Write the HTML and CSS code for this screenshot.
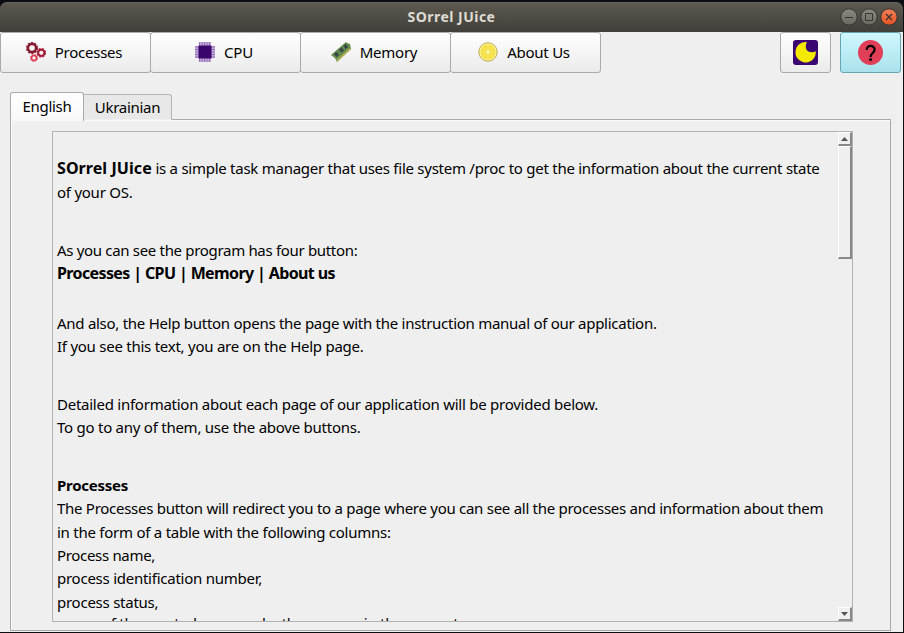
FILE: index.html
```html
<!DOCTYPE html>
<html lang="en">
<head>
<meta charset="utf-8">
<title>SOrrel JUice</title>
<link rel="stylesheet" href="styles.css">
</head>
<body>
<div class="window">
  <header class="titlebar">
    <h1>SOrrel JUice</h1>
    <div class="controls">
      <svg width="60" height="20" viewBox="0 0 60 20" fill="none">
        <defs>
          <linearGradient id="gray" x2="0" y2="1"><stop stop-color="#8b8982"/><stop offset="1" stop-color="#696760"/></linearGradient>
          <linearGradient id="red" x2="0" y2="1"><stop stop-color="#f58059"/><stop offset="1" stop-color="#e65321"/></linearGradient>
        </defs>
        <g stroke="#353430"><circle cx="10" cy="10" r="8.2" fill="url(#gray)"/><circle cx="30" cy="10" r="8.2" fill="url(#gray)"/><circle cx="50" cy="10" r="8.2" fill="url(#red)"/>
        <path d="M6 10.5h8M26.5 6.5h7v7h-7z"/><path d="M47 7l6 6M53 7l-6 6" stroke-width="1.3"/></g>
      </svg>
    </div>
  </header>
  <nav class="toolbar">
    <button class="btn processes">
      <svg width="20" height="20" viewBox="0 0 20 20" fill="none">
        <g stroke="#851b31"><circle cx="6" cy="6" r="4" stroke-width="2.4"/><circle cx="6" cy="6" r="5.4" stroke-width="1.3" stroke-dasharray="2.2 1.2"/></g>
        <g stroke="#a51c3a"><circle cx="15.3" cy="10.8" r="3.1" stroke-width="2"/><circle cx="15.3" cy="10.8" r="4.2" stroke-width="1.2" stroke-dasharray="2 1.3"/></g>
        <g stroke="#de3b55"><circle cx="8" cy="16" r="2.5" stroke-width="1.6"/><circle cx="8" cy="16" r="3.4" stroke-width="1.1" stroke-dasharray="1.5 1.17"/></g>
      </svg><span>Processes</span>
    </button>
    <button class="btn cpu">
      <svg width="20" height="20" viewBox="0 0 20 20">
        <path d="M4 0h12v4h4v12h-4v4H4v-4H0V4h4z" fill="#c0a8d8"/>
        <path d="M4.5 0v20M7 0v20M9.5 0v20M12 0v20M14.5 0v20M0 5h20M0 7.5h20M0 10h20M0 12.5h20M0 15h20" stroke="#9673b8"/>
        <path d="M3.5 3.5h13v13h-13z" fill="#3a066c"/>
      </svg><span>CPU</span>
    </button>
    <button class="btn memory">
      <svg width="20" height="20" viewBox="0 0 20 20">
        <path d="M0 13L15 0l1 1 3 1 1 5L6 20l-2-4z" fill="#5d8b4b"/>
        <path d="M3 12l2.5-2 2.5 3-2.500 2zM8 7.500l2.500-2 2.500 3-2.500 2zM12.500 4l2.500-2 2 3-2.500 2z" fill="#3c4448"/>
        <path d="M6 18.5L19 7" stroke="#d9bb55" stroke-width="2" stroke-dasharray="1.3 .7"/>
      </svg><span>Memory</span>
    </button>
    <button class="btn about">
      <svg width="20" height="20" viewBox="0 0 20 20">
        <circle cx="10" cy="10" r="9.2" fill="#fff8b5" stroke="#b9a744"/>
        <circle cx="10" cy="10" r="7.8" fill="#f5e145"/>
        <path d="M10 2v16M2 10h16M4.3 4.3l11.4 11.4M15.7 4.3L4.3 15.7" stroke="#faee7c" stroke-width=".8"/>
        <circle cx="10" cy="10" r="1.3" fill="#fffce0"/>
      </svg><span>About Us</span>
    </button>
    <button class="btn theme" aria-label="Theme">
      <svg width="25" height="25" viewBox="0 0 25 25"><rect width="25" height="25" rx="3" fill="#3b0672"/><path d="M14 2.100A10.200 10.200 0 1 0 22.800 11.200C18.500 13.500 12.500 11.800 12.800 6.500 12.900 4.500 13.400 3 14 2.100z" fill="#f6e900"/></svg>
    </button>
    <button class="btn help" aria-label="Help">
      <svg width="25" height="25" viewBox="0 0 25 25" fill="none"><circle cx="12.5" cy="12.5" r="12.5" fill="#e13e57"/><path d="M8.700 10c-.3-5.400 7.900-5.400 7.900-.4 0 3.400-4 3.400-4 7.400" stroke="#000" stroke-width="2.200"/><circle cx="12.6" cy="19.400" r="1.5" fill="#000"/></svg>
    </button>
  </nav>
  <main>
    <div class="tabs">
      <div class="tab active"><span>English</span></div>
      <div class="tab"><span>Ukrainian</span></div>
    </div>
    <section class="panel">
      <div class="browser">
        <article>
          <p><b class="name">SOrrel JUice</b> <span class="intro">is a simple task manager that uses file system /proc to get the information about the current state</span><br>of your OS.</p>
          <p><span class="tight">As you can see the program has four button:</span><br><b class="list">Processes | CPU | Memory | About us</b></p>
          <p><span class="snug">And also, the Help button opens the page with the instruction manual of our application.</span><br>If you see this text, you are on the Help page.</p>
          <p>Detailed information about each page of our application will be provided below.<br>To go to any of them, use the above buttons.</p>
          <p><b>Processes</b><br><span class="snug">The Processes button will redirect you to a page where you can see all the processes and information about them</span><br>in the form of a table with the following columns:<br><span class="tight">Process name,</span><br>process identification number,<br>process status,</p>
          <p class="next">usage of the created memory by the process in the percent,</p>
        </article>
        <div class="scrollbar">
          <div class="arrow"><svg width="7" height="4"><path d="M3.5 0L7 4H0z" fill="#555"/></svg></div>
          <div class="thumb"></div>
          <div class="arrow down"><svg width="7" height="4"><path d="M0 0h7L3.5 4z" fill="#555"/></svg></div>
        </div>
      </div>
    </section>
  </main>
</div>
</body>
</html>
```
FILE: styles.css
```css
* { box-sizing: border-box; }
body { margin: 0; height: 633px; overflow: hidden; background: #0b0d10; color: #000; font: 15px "Noto Sans", "Open Sans", sans-serif; }
.window { width: 903px; height: 632px; padding-top: 2px; display: flex; flex-direction: column; }
.titlebar { height: 30px; flex: none; display: grid; grid-template-columns: 1fr auto 1fr; align-items: center; border-radius: 7px 7px 0 0; background: linear-gradient(#5d5950, #403f3a); border-top: 1px solid #69655c; }
h1 { grid-column: 2; margin: 0; padding-bottom: 2px; color: #dfdbd2; font-size: 14px; line-height: 26px; letter-spacing: .48px; }
.controls { justify-self: end; height: 20px; margin: 0 4px 2px 0; }
svg { display: block; flex: none; }
.toolbar { height: 41px; flex: none; display: flex; background: #efefef; }
.btn { width: 151px; height: 41px; margin: 0 -1px 0 0; padding: 0 3px 2px 0; border: 1px solid #aaa; border-radius: 3px; background: linear-gradient(#fff, #ebebeb); font: inherit; color: #000; display: flex; align-items: center; justify-content: center; letter-spacing: -.25px; }
.btn span { margin-left: 9px; }
.theme { width: 51px; margin-left: auto; padding: 0; }
.help { width: 61px; margin: 0 2px 0 10px; padding: 0; border-color: #65a6b3; background: linear-gradient(#d0f7ff, #a9e2ec); }
main { flex: 1; min-height: 0; background: #efefef; padding: 19px 12px 1px 10px; display: flex; flex-direction: column; }
.tabs { height: 27px; display: flex; align-items: flex-end; flex: none; position: relative; }
.tab { width: 88px; height: 26px; margin-bottom: -1px; line-height: 25px; text-align: center; border: 1px solid #b5b5b5; border-left: 0; border-bottom-color: #efefef; border-radius: 0 3px 0 0; background: #e8e8e8; letter-spacing: -.3px; }
.tab.active { width: 74px; height: 29px; margin-bottom: -2px; line-height: 27px; background: linear-gradient(#fff, #f8f8f8); border: 1px solid #aaa; border-bottom: 0; border-radius: 3px 3px 0 0; }
.panel { flex: 1; min-height: 0; border: 1px solid #aaa; box-shadow: inset 1px 1px #fafafa; padding: 11px 37px 8px 41px; }
.browser { height: 100%; border: 1px solid #b2b2b2; display: flex; overflow: hidden; }
article { flex: 1; padding: 25.4px 0 0 4px; white-space: nowrap; letter-spacing: -.25px; line-height: 23.4px; overflow: hidden; }
p { margin: 0 0 34.5px; }
p:nth-child(2) { margin-bottom: 26px; }
p:nth-child(5) { margin: -.4px 0 -2.4px; }
.name { font-size: 16px; letter-spacing: .07px; }
.intro { letter-spacing: -.26px; }
.snug { letter-spacing: -.275px; }
.tight { letter-spacing: -.32px; }
.list { font-size: 16px; letter-spacing: -.62px; }
.scrollbar { width: 14px; flex: none; display: flex; flex-direction: column; }
.arrow { height: 14px; border: solid; border-width: 1px 2px 2px 1px; border-color: #fff #888 #888 #fff; display: flex; align-items: center; justify-content: center; }
.thumb { height: 113px; border: solid; border-width: 1px 2px 2px 1px; border-color: #fff #888 #888 #fff; }
.down { margin-top: auto; }
```
